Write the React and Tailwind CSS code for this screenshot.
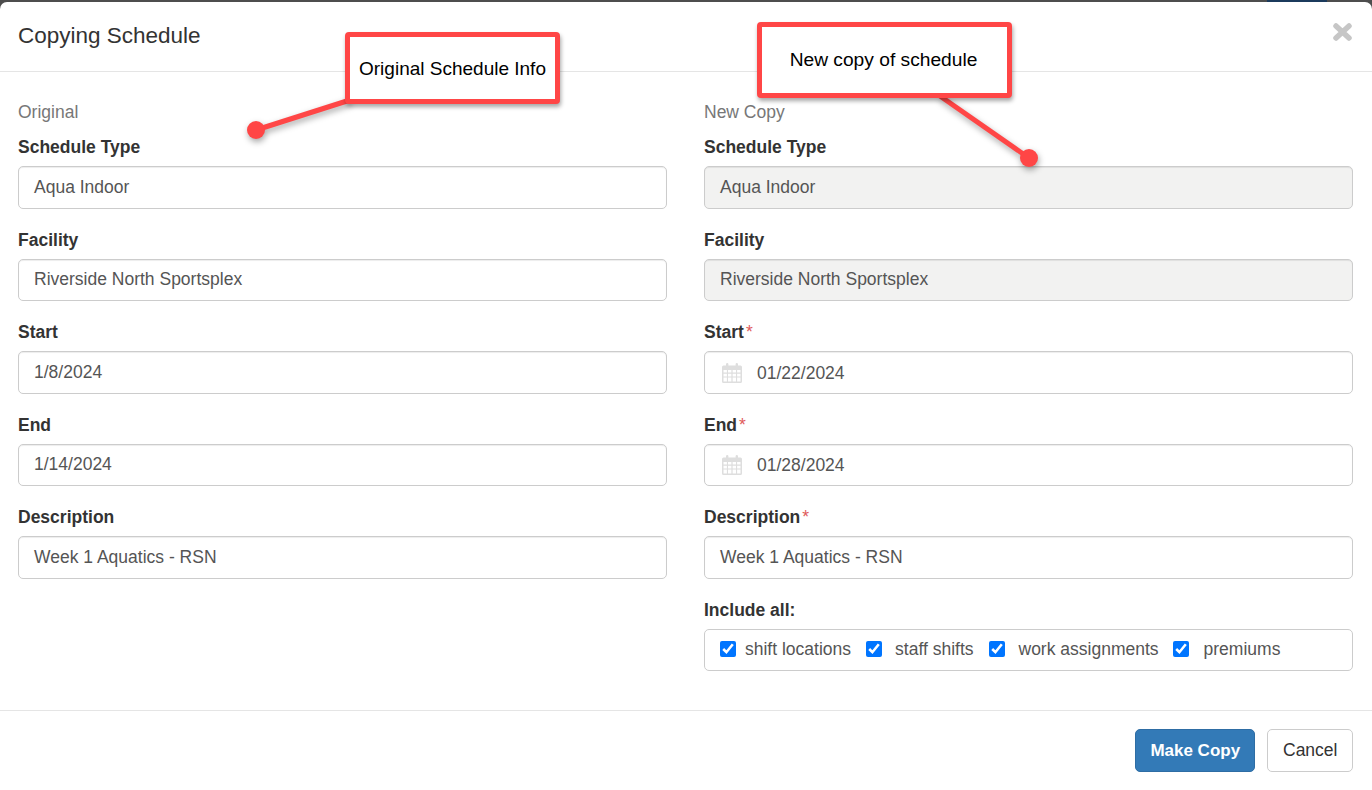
const FONT = "font-['Liberation_Sans',Arial,sans-serif]";

function CalendarIcon() {
  return (
    <svg width="20" height="20" viewBox="0 0 20 20" className="shrink-0">
      <path
        fill="#dedede"
        fillRule="evenodd"
        d="M1.5 2.5H4V1.2a1.2 1.2 0 0 1 2.4 0v1.3h7.2V1.2a1.2 1.2 0 0 1 2.4 0v1.3h2.5A1.5 1.5 0 0 1 20 4v14.5a1.5 1.5 0 0 1-1.5 1.5h-17A1.5 1.5 0 0 1 0 18.5V4a1.5 1.5 0 0 1 1.5-1.5zM1.5 7v2.6h3.4V7zM6 7v2.6h3.4V7zM10.6 7v2.6H14V7zM15.1 7v2.6h3.4V7zM1.5 10.8v2.6h3.4v-2.6zM6 10.8v2.6h3.4v-2.6zM10.6 10.8v2.6H14v-2.6zM15.1 10.8v2.6h3.4v-2.6zM1.5 14.6v3.9h3.4v-3.9zM6 14.6v3.9h3.4v-3.9zM10.6 14.6v3.9H14v-3.9zM15.1 14.6v3.9h3.4v-3.9z"
      />
    </svg>
  );
}

function Field({ label, value, required, disabled, date }) {
  return (
    <div className="mb-[18.75px]">
      <label className="block mb-[6.25px] h-[25px] leading-[25px] font-bold text-[#333]">
        {label}
        {required && <span className="text-[#e05a5a] font-normal ml-[2px]">*</span>}
      </label>
      <div
        className={`flex items-center h-[42.5px] px-[15px] rounded-[5px] border border-[#ccc] text-[#555] shadow-[inset_0_1px_1px_rgba(0,0,0,0.075)] ${
          disabled ? 'bg-[#f2f2f1]' : 'bg-white'
        }`}
      >
        {date && (
          <span className="mr-[15px] ml-[2px]">
            <CalendarIcon />
          </span>
        )}
        <span className={date ? 'pt-[1.5px]' : 'pb-[0.5px]'}>{value}</span>
      </div>
    </div>
  );
}

function Check({ label, className }) {
  return (
    <>
      <input type="checkbox" checked readOnly className={`m-0 w-[16px] h-[16px] shrink-0 ${className}`} />
      <span>{label}</span>
    </>
  );
}

export default function App() {
  return (
    <div className={`relative w-[1372px] h-[790px] overflow-hidden bg-[#4d4d4d] pt-[2px] text-[17.5px] leading-[25px] text-[#333] ${FONT}`}>
      {/* Bottom of a link on the page behind the modal */}
      <div className="absolute left-[1267px] top-0 w-[60px] h-[2px] bg-[#1b3a5c]" />

      <div className="relative h-[788px] bg-white rounded-t-[7px] flex flex-col">
        {/* Header */}
        <div className="relative h-[70px] shrink-0 border-b border-[#e5e5e5] px-[18px]">
          <h4 className="pt-[20px] text-[22.5px] leading-[28px] text-[#333]">Copying Schedule</h4>
          <button className="absolute right-[20px] top-[21px]">
            <svg width="19" height="18" viewBox="0 0 19 18" className="block">
              <path d="M3 3l13 12M16 3L3 15" stroke="#c6c6c6" strokeWidth="5.5" strokeLinecap="round" fill="none" />
            </svg>
          </button>
        </div>

        {/* Body */}
        <div className="flex-1 grid grid-cols-2 pt-[28px]">
          <div className="pl-[18px] pr-[18.75px]">
            <div className="h-[25px] mb-[10px] text-[#777]">Original</div>
            <Field label="Schedule Type" value="Aqua Indoor" />
            <Field label="Facility" value="Riverside North Sportsplex" />
            <Field label="Start" value="1/8/2024" />
            <Field label="End" value="1/14/2024" />
            <Field label="Description" value="Week 1 Aquatics - RSN" />
          </div>
          <div className="pl-[18px] pr-[18.75px]">
            <div className="h-[25px] mb-[10px] text-[#777]">New Copy</div>
            <Field label="Schedule Type" value="Aqua Indoor" disabled />
            <Field label="Facility" value="Riverside North Sportsplex" disabled />
            <Field label="Start" value="01/22/2024" required date />
            <Field label="End" value="01/28/2024" required date />
            <Field label="Description" value="Week 1 Aquatics - RSN" required />
            <label className="block mb-[6.25px] h-[25px] leading-[25px] font-bold text-[#333]">Include all:</label>
            <div className="flex items-center h-[42.5px] pb-[2px] px-[15px] rounded-[5px] border border-[#ccc] text-[#555] bg-white">
              <Check label="shift locations" className="mr-[9px]" />
              <Check label="staff shifts" className="ml-[15px] mr-[13px]" />
              <Check label="work assignments" className="ml-[15px] mr-[14px]" />
              <Check label="premiums" className="ml-[14px] mr-[15px]" />
            </div>
          </div>
        </div>

        {/* Footer */}
        <div className="h-[80px] shrink-0 border-t border-[#e5e5e5] flex justify-end items-start gap-[12px] pt-[18px] pr-[18.75px]">
          <button className="h-[43px] w-[120px] rounded-[5px] border border-[#2e6da4] bg-[#337ab7] text-white text-[17px] font-bold">
            Make Copy
          </button>
          <button className="h-[43px] w-[86px] rounded-[5px] border border-[#ccc] bg-white text-[#333]">Cancel</button>
        </div>
      </div>

      {/* Annotation connectors */}
      <svg width="1372" height="790" className="absolute inset-0 pointer-events-none drop-shadow-[1px_3px_3px_rgba(0,0,0,0.35)]">
        <path d="M350 100L256 130" stroke="#ff4646" strokeWidth="5" fill="none" />
        <circle cx="256" cy="130" r="9" fill="#ff4646" />
        <path d="M940 96L1029 158" stroke="#ff4646" strokeWidth="5" fill="none" />
        <circle cx="1029" cy="158" r="9" fill="#ff4646" />
      </svg>

      {/* Annotation boxes */}
      <div className="absolute left-[345px] top-[32px] w-[215px] h-[72px] bg-white border-[5px] border-[#ff4646] rounded-[4px] shadow-[1px_3px_4px_rgba(0,0,0,0.35)] flex items-center justify-center text-black text-[19px]">
        Original Schedule Info
      </div>
      <div className="absolute left-[757px] top-[22px] w-[255px] h-[76px] pb-[2px] pr-[2px] bg-white border-[5px] border-[#ff4646] rounded-[4px] shadow-[1px_3px_4px_rgba(0,0,0,0.35)] flex items-center justify-center text-black text-[19.2px]">
        New copy of schedule
      </div>
    </div>
  );
}
